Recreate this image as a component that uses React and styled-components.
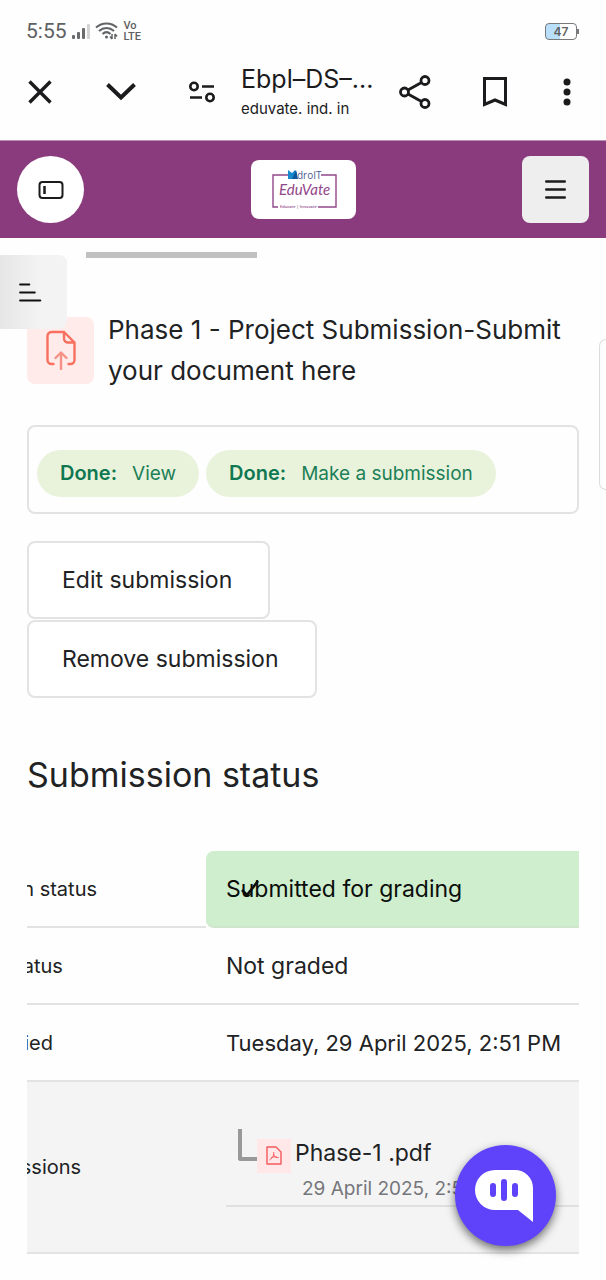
import React from "react";
import styled, { createGlobalStyle } from "styled-components";

const GlobalStyle = createGlobalStyle`
  *, *::before, *::after { box-sizing: border-box; }
  body {
    margin: 0;
    background: #fefefe;
    color: #212223;
    font-family: Inter, "Noto Sans", sans-serif;
    overflow-x: hidden;
  }
  button { font: inherit; color: inherit; cursor: pointer; }
`;

/* ---------- phone status bar ---------- */

const StatusBar = styled.div`
  display: flex;
  align-items: center;
  gap: 5px;
  height: 60px;
  padding: 2px 29px 0 26px;
  color: #5f6062;
`;

const Clock = styled.span`
  font-family: Roboto, sans-serif;
  font-size: 21px;
  line-height: 24px;
`;

const VolteBadge = styled.span`
  display: grid;
  font-family: Roboto, sans-serif;
  font-size: 11px;
  font-weight: 500;
  line-height: 11px;
`;

const Battery = styled.span`
  display: grid;
  place-items: center;
  position: relative;
  width: 32px;
  height: 17px;
  margin-left: auto;
  border: 1px solid #77797c;
  border-radius: 4px;
  background: linear-gradient(90deg, #b9dffb 47%, #fefefe 47%);
  font-size: 12px;
  font-weight: 600;
  line-height: 15px;

  &::after {
    content: "";
    position: absolute;
    right: -3px;
    top: 5px;
    width: 2px;
    height: 5px;
    background: #77797c;
  }
`;

/* ---------- browser toolbar ---------- */

const Toolbar = styled.div`
  display: flex;
  align-items: center;
  height: 80px;
  padding: 0 27px 16px 20px;
`;

const ToolGroup = styled.div`
  display: flex;
  align-items: center;
  gap: ${(p) => p.$gap}px;
`;

const ToolButton = styled.button`
  display: grid;
  place-items: center;
  width: ${(p) => (p.$narrow ? 24 : 40)}px;
  height: 40px;
  padding: 0;
  border: 0;
  background: none;
`;

const PageInfo = styled.div`
  flex: 1;
  min-width: 0;
  padding-left: 19px;
  color: #1b1b1d;
  white-space: nowrap;
`;

const PageName = styled.div`
  font-size: 25px;
  line-height: 34px;
`;

const PageHost = styled.div`
  font-size: 15px;
  line-height: 26px;
`;

/* ---------- site header ---------- */

const Header = styled.header`
  display: grid;
  grid-template-columns: 1fr auto 1fr;
  align-items: center;
  height: 98px;
  padding: 0 17px;
  border-top: 1px solid #b98fb3;
  background: #8a3b7e;
`;

const RoundButton = styled.button`
  display: grid;
  place-items: center;
  width: 67px;
  height: 67px;
  padding: 0;
  border: 0;
  border-radius: 50%;
  background: #fff;
`;

const MenuButton = styled(RoundButton)`
  justify-self: end;
  border-radius: 8px;
  background: #efeeef;
`;

const LogoLink = styled.a`
  display: block;
  width: 105px;
  height: 59px;
  border-radius: 8px;
  background: #fff;
`;

/* ---------- page ---------- */

const Main = styled.main`
  position: relative;
  padding: 14px 27px 24px;
`;

const ScrollTrack = styled.div`
  width: 171px;
  height: 6px;
  margin-left: 59px;
  background: #c1c1c1;
`;

const DrawerToggle = styled.button`
  position: absolute;
  z-index: 1;
  top: 17px;
  left: 0;
  display: grid;
  align-items: center;
  width: 67px;
  height: 74px;
  padding: 0 0 0 19px;
  border: 0;
  border-radius: 0 8px 8px 0;
  background: linear-gradient(90deg, #e6e6e6, #f3f3f3 60%);
`;

const SidePanelEdge = styled.div`
  position: absolute;
  top: 101px;
  right: 0;
  width: 7px;
  height: 151px;
  border: 1px solid #dcdcdc;
  border-right: 0;
  border-radius: 8px 0 0 8px;
`;

const ActivityHeader = styled.div`
  display: flex;
  align-items: center;
  gap: 14px;
  margin-top: 51px;
`;

const ActivityIcon = styled.span`
  flex: none;
  display: grid;
  place-items: center;
  width: 67px;
  height: 67px;
  border-radius: 8px;
  background: #ffebe9;
`;

const ActivityTitle = styled.h1`
  margin: 0;
  font-size: 26px;
  font-weight: 400;
  line-height: 41px;
`;

const Completion = styled.div`
  display: flex;
  gap: 7px;
  margin-top: 34px;
  padding: 23px 8px 15px;
  border: 2px solid #e3e3e3;
  border-radius: 8px;
`;

const Pill = styled.span`
  display: flex;
  align-items: baseline;
  gap: 15px;
  padding: 0 23px;
  border-radius: 24px;
  background: #e9f3dc;
  color: #1c7f57;
  font-size: 19px;
  line-height: 47px;
  white-space: nowrap;

  strong { font-size: 20px; font-weight: 600; color: #0f7850; }
`;

const Actions = styled.div`
  display: grid;
  justify-items: start;
  gap: 1px;
  margin-top: 27px;
`;

const ActionButton = styled.button`
  height: 78px;
  padding: 0 36px 0 33px;
  border: 2px solid #e3e3e3;
  border-radius: 8px;
  background: #fff;
  font-size: 23px;
`;

const SectionTitle = styled.h2`
  margin: 53px 0 52px;
  font-size: 34px;
  font-weight: 400;
  line-height: 48px;
`;

/* ---------- status table, scrolled part of the way to the right ---------- */

const TableScroller = styled.div`
  overflow: hidden;
`;

const Table = styled.table`
  width: calc(100% + 102px);
  margin-left: -102px;
  border-collapse: separate;
  border-spacing: 0;
  table-layout: fixed;
`;

const LabelCell = styled.th`
  width: 281px;
  height: ${(p) => (p.$tall ? 172 : 77)}px;
  padding: 0;
  border-bottom: 2px solid #e3e3e3;
  background: ${(p) => (p.$tall ? "#f4f4f4" : "transparent")};
  font-size: 20px;
  font-weight: 400;
  text-align: left;
`;

const ValueCell = styled.td`
  position: relative;
  padding: 0 0 0 20px;
  border-bottom: 2px solid #e3e3e3;
  border-radius: ${(p) => (p.$done ? "8px 0 0 8px" : "0")};
  border-bottom-color: ${(p) => (p.$done ? "#cfe6cd" : "#e3e3e3")};
  background: ${(p) => (p.$done ? "#cfeecd" : p.$tall ? "#f4f4f4" : "transparent")};
  color: ${(p) => (p.$done ? "#0b0d0b" : "inherit")};
  font-size: ${(p) => (p.$date ? 22 : 23)}px;
  white-space: nowrap;
`;

const Tick = styled.svg`
  position: absolute;
  left: 34px;
  top: 28px;
`;

const FileEntry = styled.div`
  display: grid;
  grid-template-columns: 19px 34px 1fr;
  align-items: center;
  margin-top: 1px;
  padding-left: 12px;
  border-bottom: 2px solid #e0e0e0;
`;

const Branch = styled.span`
  width: 19px;
  height: 32px;
  align-self: start;
  border: solid #999;
  border-width: 0 0 4px 4px;
  border-bottom-left-radius: 3px;
`;

const PdfIcon = styled.span`
  display: grid;
  place-items: center;
  align-self: end;
  height: 34px;
  background: #ffe8e7;
`;

const FileLink = styled.a`
  height: 44px;
  padding: 2px 0 0 4px;
  color: #212223;
  line-height: 44px;
  text-decoration: none;
`;

const FileDate = styled.div`
  grid-column: 1 / -1;
  padding-left: 64px;
  color: #75767a;
  font-size: 19px;
  line-height: 32px;
`;

const ChatButton = styled.button`
  position: fixed;
  z-index: 2;
  right: 50px;
  bottom: 34px;
  display: grid;
  place-items: center;
  width: 101px;
  height: 101px;
  padding: 0 4px 0 0;
  border: 0;
  border-radius: 50%;
  background: #5e43fb;
  box-shadow: 0 4px 10px rgba(0, 0, 0, 0.55);
`;

function Logo() {
  return (
    <svg width="105" height="59" viewBox="0 0 105 59" role="img" aria-label="EduVate">
      <g fill="none" stroke="#92478b" strokeWidth="1.4">
        <path d="M37 15H22v32h5" />
        <path d="M70 15h15v32H67" />
      </g>
      <path d="M37 10l4 3 3-3 2 3v6h-9z" fill="#1689cf" />
      <path d="M41 19l4-9 2 9z" fill="#0c5a9c" />
      <text x="46" y="19" fontFamily="Open Sans, sans-serif" fontSize="10" fill="#4b5d94">droIT</text>
      <text x="28" y="35" fontFamily="Lato, sans-serif" fontStyle="italic" fontSize="15" fill="#92478b">EduVate</text>
      <text x="29" y="48" fontFamily="Open Sans, sans-serif" fontWeight="600" fontSize="4" fill="#92478b">Educate | Innovate</text>
    </svg>
  );
}

export default function App() {
  return (
    <>
      <GlobalStyle />
      <StatusBar>
        <Clock>5:55</Clock>
        <svg width="18" height="16" viewBox="0 0 18 16" fill="#6a6b6d">
          <rect x="0" y="12" width="3" height="4" rx="1" />
          <rect x="5" y="9" width="3" height="7" rx="1" />
          <rect x="10" y="5" width="3" height="11" rx="1" />
          <rect x="15" y="1" width="3" height="15" rx="1" fill="#d3d3d4" />
        </svg>
        <svg width="24" height="20" viewBox="0 0 24 20" fill="none" stroke="#626365" strokeWidth="2">
          <path d="M1 6.500C7 1 16 1 22 6.500M4 10c4.500-4 10.500-4 15 0M7.500 13c2.500-2.300 5.500-2.300 8 0" />
          <circle cx="11.500" cy="16" r="1.500" fill="#626365" stroke="none" />
          <path d="M17 13v5M17 18l-2-2.500M20 18v-5M20 13l2 2.500" strokeWidth="1.500" />
        </svg>
        <VolteBadge><span>Vo</span><span>LTE</span></VolteBadge>
        <Battery>47</Battery>
      </StatusBar>

      <Toolbar>
        <ToolGroup $gap={41}>
          <ToolButton aria-label="Close">
            <svg width="24" height="24" viewBox="0 0 24 24" stroke="#1b1b1d" strokeWidth="3.400"><path d="M1.500 1.500l21 21M22.500 1.500l-21 21" /></svg>
          </ToolButton>
          <ToolButton aria-label="Minimise">
            <svg width="30" height="18" viewBox="0 0 30 18" fill="none" stroke="#1b1b1d" strokeWidth="4"><path d="M1.500 1.500L15 14.500 28.500 1.500" /></svg>
          </ToolButton>
          <ToolButton aria-label="Site settings">
            <svg width="26" height="22" viewBox="0 0 26 22" fill="none" stroke="#1b1b1d" strokeWidth="2.600">
              <circle cx="5" cy="5.500" r="3.700" /><path d="M13 5.500h12M1 16.500h12" /><circle cx="21" cy="16.500" r="3.700" />
            </svg>
          </ToolButton>
        </ToolGroup>
        <PageInfo>
          <PageName>Ebpl–DS–...</PageName>
          <PageHost>eduvate. ind. in</PageHost>
        </PageInfo>
        <ToolGroup $gap={40}>
          <ToolButton aria-label="Share">
            <svg width="32" height="34" viewBox="0 0 32 34" fill="none" stroke="#1b1b1d" strokeWidth="2.800">
              <circle cx="5.500" cy="17" r="4" /><circle cx="26" cy="5.500" r="4" /><circle cx="26" cy="28.500" r="4" /><path d="M9 15l13.500-7.500M9 19l13.500 7.500" />
            </svg>
          </ToolButton>
          <ToolButton aria-label="Bookmark">
            <svg width="24" height="30" viewBox="0 0 24 30" fill="none" stroke="#1b1b1d" strokeWidth="3"><path d="M1.500 1.500h21v26L12 23 1.500 27.500z" /></svg>
          </ToolButton>
          <ToolButton $narrow aria-label="More">
            <svg width="8" height="28" viewBox="0 0 8 28" fill="#1b1b1d"><circle cx="4" cy="4" r="3.500" /><circle cx="4" cy="14" r="3.500" /><circle cx="4" cy="24" r="3.500" /></svg>
          </ToolButton>
        </ToolGroup>
      </Toolbar>

      <Header>
        <RoundButton aria-label="Toggle sidebar">
          <svg width="26" height="18" viewBox="0 0 26 18" fill="none" stroke="#1b1b1d" strokeWidth="2"><rect x="1.500" y="1" width="23" height="16" rx="3" /><path d="M6.500 5v8" strokeWidth="2.500" /></svg>
        </RoundButton>
        <LogoLink href="#home"><Logo /></LogoLink>
        <MenuButton aria-label="Menu">
          <svg width="21" height="19" viewBox="0 0 21 19" stroke="#1b1b1d" strokeWidth="2.400" strokeLinecap="round"><path d="M1.200 1.500h18.600M1.200 9.500h18.600M1.200 17.500h18.600" /></svg>
        </MenuButton>
      </Header>

      <Main>
        <ScrollTrack />
        <DrawerToggle aria-label="Open course index">
          <svg width="23" height="19" viewBox="0 0 23 19" stroke="#101011" strokeWidth="2.200" strokeLinecap="round"><path d="M1.200 1.500h9M1.200 9.500h14.500M1.200 17.500h20" /></svg>
        </DrawerToggle>
        <SidePanelEdge />

        <ActivityHeader>
          <ActivityIcon>
            <svg width="30" height="40" viewBox="0 0 30 40" fill="none" stroke="#f8705f" strokeWidth="2.400" strokeLinecap="round" strokeLinejoin="round">
              <path d="M7.500 34H5.500a4 4 0 0 1-4-4V6a4 4 0 0 1 4-4H18L28.500 12.500V30a4 4 0 0 1-4 4h-2M18 2v6.500a4 4 0 0 0 4 4h6.500" />
              <path d="M15 39V23M9.500 28l5.500-5.500L20.500 28" stroke="#f69186" />
            </svg>
          </ActivityIcon>
          <ActivityTitle>Phase 1 - Project Submission-Submit your document here</ActivityTitle>
        </ActivityHeader>

        <Completion>
          <Pill><strong>Done:</strong><span>View</span></Pill>
          <Pill><strong>Done:</strong><span>Make a submission</span></Pill>
        </Completion>

        <Actions>
          <ActionButton>Edit submission</ActionButton>
          <ActionButton>Remove submission</ActionButton>
        </Actions>

        <SectionTitle>Submission status</SectionTitle>

        <TableScroller>
          <Table>
            <tbody>
              <tr>
                <LabelCell scope="row">Submission status</LabelCell>
                <ValueCell $done>
                  Submitted for grading
                  <Tick width="20" height="20" viewBox="0 0 20 20" fill="none" stroke="#0b0d0b" strokeWidth="2.600"><path d="M2 11l5 5L18 2" /></Tick>
                </ValueCell>
              </tr>
              <tr>
                <LabelCell scope="row">Grading status</LabelCell>
                <ValueCell>Not graded</ValueCell>
              </tr>
              <tr>
                <LabelCell scope="row">Last modified</LabelCell>
                <ValueCell $date>Tuesday, 29 April 2025, 2:51 PM</ValueCell>
              </tr>
              <tr>
                <LabelCell scope="row" $tall>File submissions</LabelCell>
                <ValueCell $tall>
                  <FileEntry>
                    <Branch />
                    <PdfIcon>
                      <svg width="16" height="19" viewBox="0 0 16 19" fill="none" stroke="#f4595d" strokeWidth="1.400" strokeLinejoin="round">
                        <path d="M1 1h9l5 5v12H1z" /><path d="M7.500 6c1.500 3-2.500 7-4 8M7.500 8c.5 3 3 4 5 3.500M5 12c2-1.200 4-1.400 6-1" strokeWidth="1" />
                      </svg>
                    </PdfIcon>
                    <FileLink href="#phase-1">Phase-1 .pdf</FileLink>
                    <FileDate>29 April 2025, 2:51 PM</FileDate>
                  </FileEntry>
                </ValueCell>
              </tr>
            </tbody>
          </Table>
        </TableScroller>
      </Main>

      <ChatButton aria-label="Open chat">
        <svg width="58" height="54" viewBox="0 0 58 54">
          <path d="M20 1h20a18 18 0 0 1 18 18v34L43 41H20A20 20 0 0 1 20 1z" fill="#fff" />
          <g fill="#5e43fb"><rect x="15" y="14" width="6" height="14" rx="3" /><rect x="26" y="10" width="6" height="22" rx="3" /><rect x="37" y="14" width="6" height="14" rx="3" /></g>
        </svg>
      </ChatButton>
    </>
  );
}
